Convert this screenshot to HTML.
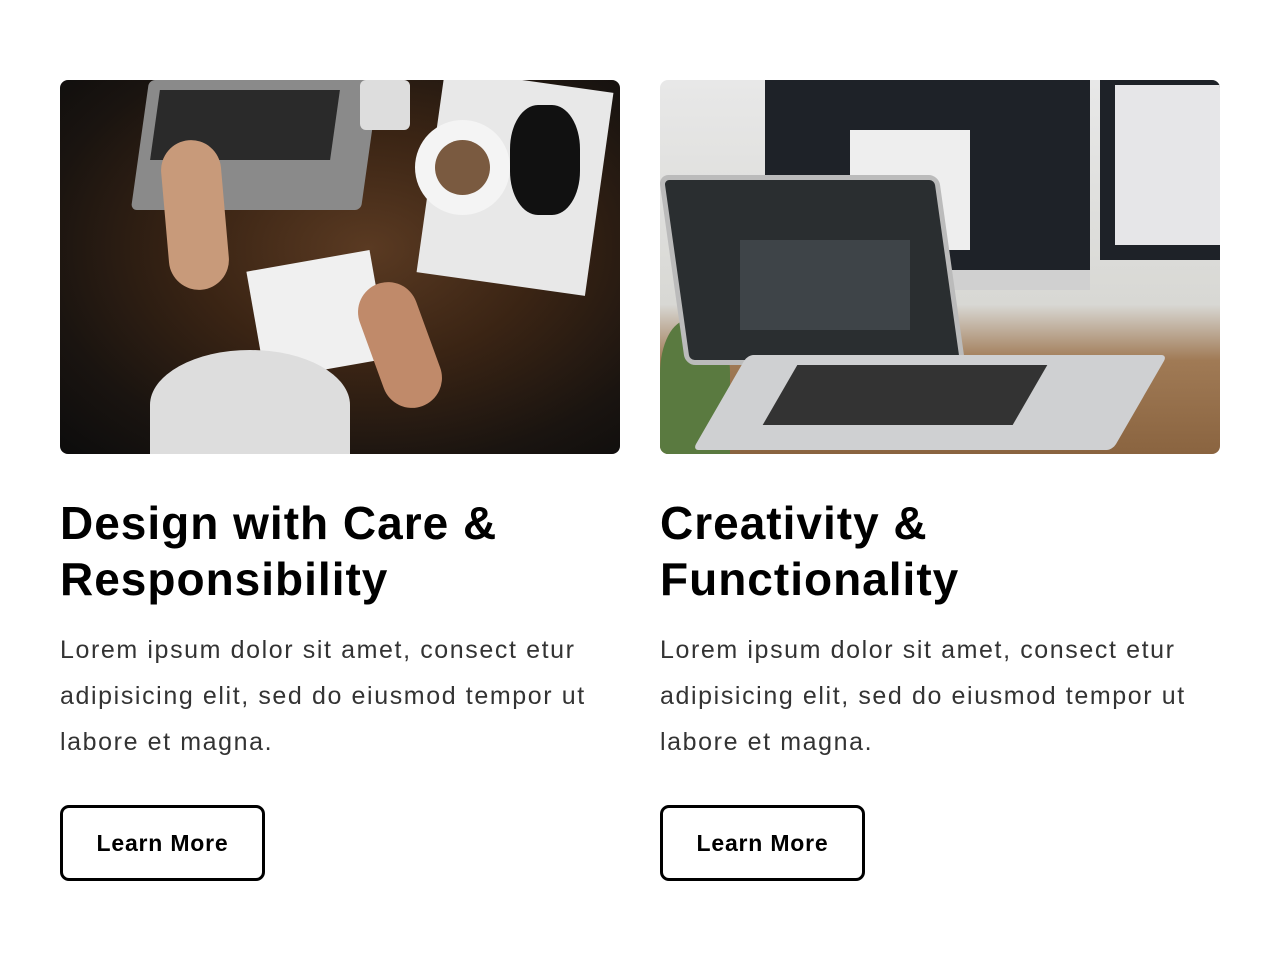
<!DOCTYPE html>
<html><head><meta charset="utf-8"><style>
*{margin:0;padding:0;box-sizing:border-box}
body{width:1280px;height:960px;background:#fff;font-family:"Liberation Sans",sans-serif;position:relative;overflow:hidden}
.card{position:absolute;top:80px;width:560px}
.img{width:560px;height:374px;border-radius:8px;overflow:hidden;position:relative}
h2{margin-top:41px;font-size:46px;line-height:56px;font-weight:700;color:#000;letter-spacing:1px}
p{margin-top:20px;font-size:25px;line-height:46px;color:#333;letter-spacing:1.6px;width:560px}
.btn{margin-top:40px;width:205px;height:76px;border:3px solid #000;border-radius:9px;display:flex;align-items:center;justify-content:center;font-weight:700;font-size:23px;color:#000;letter-spacing:0.8px}
.s{position:absolute}
</style></head><body>
<div class="card" style="left:60px">
 <div class="img" style="background:radial-gradient(ellipse at 55% 45%,#5a3a22 0%,#3a2414 40%,#1a1410 75%,#0c0c0c 100%)">
  <div class="s" style="left:80px;top:0;width:230px;height:130px;background:#8a8a8a;transform:skewX(-8deg);border-radius:6px"></div>
  <div class="s" style="left:95px;top:10px;width:180px;height:70px;background:#2a2a2a;transform:skewX(-8deg)"></div>
  <div class="s" style="left:300px;top:0;width:50px;height:50px;background:#ddd;border-radius:6px"></div>
  <div class="s" style="left:370px;top:0;width:170px;height:205px;background:#e8e8e8;transform:rotate(8deg)"></div>
  <div class="s" style="left:355px;top:40px;width:95px;height:95px;background:#f4f4f4;border-radius:50%"></div>
  <div class="s" style="left:375px;top:60px;width:55px;height:55px;background:#7a5a40;border-radius:50%"></div>
  <div class="s" style="left:450px;top:25px;width:70px;height:110px;background:#111;border-radius:40%"></div>
  <div class="s" style="left:195px;top:180px;width:125px;height:110px;background:#f0f0f0;transform:rotate(-10deg)"></div>
  <div class="s" style="left:90px;top:270px;width:200px;height:110px;background:#ddd;border-radius:50% 50% 0 0"></div>
  <div class="s" style="left:105px;top:60px;width:60px;height:150px;background:#c89a7a;border-radius:30px;transform:rotate(-5deg)"></div>
  <div class="s" style="left:310px;top:200px;width:60px;height:130px;background:#c08a6a;border-radius:30px;transform:rotate(-20deg)"></div>
 </div>
 <h2>Design with Care &amp;<br>Responsibility</h2>
 <p>Lorem ipsum dolor sit amet, consect etur<br>adipisicing elit, sed do eiusmod tempor ut<br>labore et magna.</p>
 <div class="btn">Learn More</div>
</div>
<div class="card" style="left:660px">
 <div class="img" style="background:linear-gradient(180deg,#e8e8e8 0%,#d8d8d4 60%,#a07a55 75%,#8a6440 100%)">
  <div class="s" style="left:105px;top:0;width:325px;height:190px;background:#1e2228"></div>
  <div class="s" style="left:190px;top:50px;width:120px;height:120px;background:#eee"></div>
  <div class="s" style="left:105px;top:190px;width:325px;height:20px;background:#d0d0d0"></div>
  <div class="s" style="left:440px;top:0;width:120px;height:180px;background:#1e2228"></div>
  <div class="s" style="left:455px;top:5px;width:105px;height:160px;background:#e6e6e8"></div>
  <div class="s" style="left:0;top:240px;width:70px;height:134px;background:#5a7a40;border-radius:40% 40% 0 0"></div>
  <div class="s" style="left:12px;top:95px;width:280px;height:190px;background:#2a2e30;transform:skewX(8deg);border-radius:10px;border:5px solid #bbb"></div>
  <div class="s" style="left:80px;top:160px;width:170px;height:90px;background:#3e4448"></div>
  <div class="s" style="left:60px;top:275px;width:420px;height:95px;background:#cfd0d2;transform:skewX(-30deg);border-radius:6px"></div>
  <div class="s" style="left:120px;top:285px;width:250px;height:60px;background:#333;transform:skewX(-30deg)"></div>
 </div>
 <h2>Creativity &amp;<br>Functionality</h2>
 <p>Lorem ipsum dolor sit amet, consect etur<br>adipisicing elit, sed do eiusmod tempor ut<br>labore et magna.</p>
 <div class="btn">Learn More</div>
</div>
</body></html>
